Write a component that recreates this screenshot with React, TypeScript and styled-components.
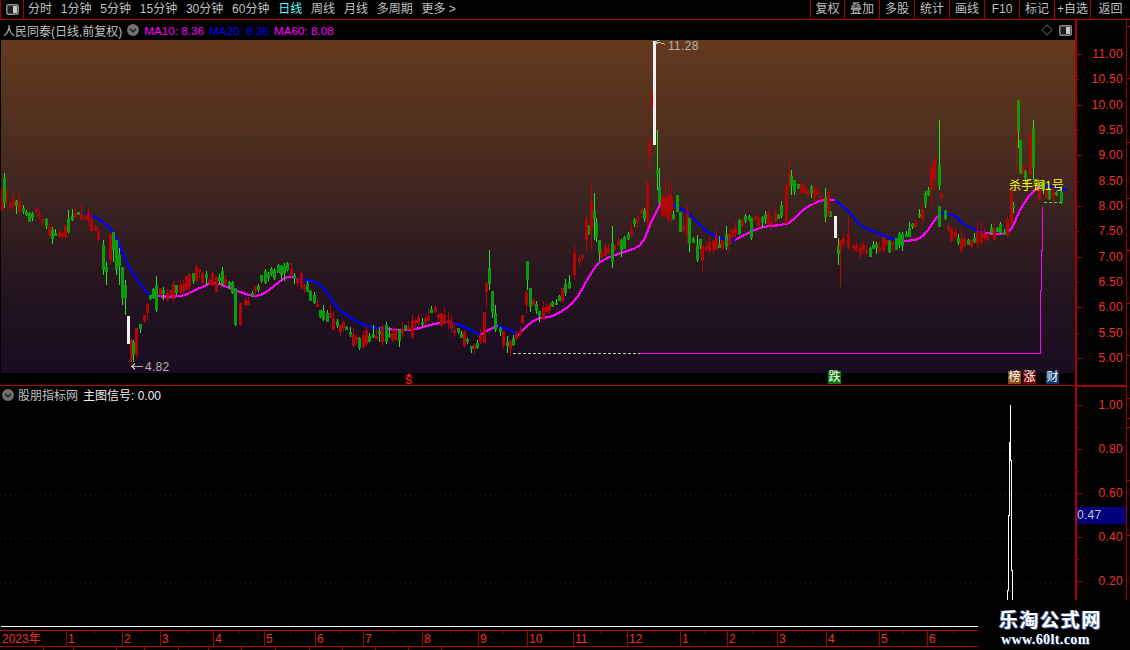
import styled, { createGlobalStyle } from "styled-components";

const RED = "#a80000";
const CJK = `"Liberation Sans", "Noto Sans CJK SC", sans-serif`;

const GlobalStyle = createGlobalStyle`
  html, body {
    margin: 0;
    padding: 0;
    background: #000;
    overflow: hidden;
  }
`;

const Page = styled.div`
  position: relative;
  width: 1130px;
  height: 650px;
  background: #000;
  overflow: hidden;
  font-family: ${CJK};
  font-size: 12px;
  color: #c0c0c0;
  display: flex;
  flex-direction: column;
`;

const Toolbar = styled.div`
  height: 20px;
  box-sizing: border-box;
  border-bottom: 1px solid ${RED};
  display: flex;
  align-items: center;
  flex: none;
`;

const ToggleCell = styled.div`
  width: 24px;
  height: 19px;
  box-sizing: border-box;
  border-right: 1px solid ${RED};
  border-left: 1px solid ${RED};
  display: flex;
  align-items: center;
  justify-content: center;
  margin-right: 4px;
`;

const PeriodList = styled.div`
  display: flex;
  gap: 8.8px;
`;

const Period = styled.span<{ $active?: boolean }>`
  color: ${({ $active }) => ($active ? "#55ffff" : "#c0c0c0")};
  line-height: 19px;
  white-space: nowrap;
`;

const ActionList = styled.div`
  margin-left: auto;
  display: flex;
  height: 19px;
`;

const Action = styled.div<{ $w: number }>`
  width: ${({ $w }) => $w}px;
  box-sizing: border-box;
  border-left: 1px solid ${RED};
  text-align: center;
  line-height: 19px;
  white-space: nowrap;
`;

const Workspace = styled.div`
  height: 610px;
  display: flex;
  flex: none;
`;

const ChartColumn = styled.div`
  width: 1075px;
  display: flex;
  flex-direction: column;
  flex: none;
`;

const TitleRow = styled.div`
  height: 20px;
  display: flex;
  align-items: center;
  padding: 0 3px 0 3px;
  flex: none;
`;

const TitleText = styled.span`
  margin-right: 5px;
  white-space: nowrap;
`;

const MaText = styled.span<{ $color: string }>`
  color: ${({ $color }) => $color};
  font-size: 11.7px;
  margin-left: 5px;
  white-space: nowrap;
`;

const TitleTools = styled.div`
  margin-left: auto;
  display: flex;
  align-items: center;
  gap: 6px;
`;

const PriceChart = styled.div`
  position: relative;
  height: 333px;
  margin-left: 1px;
  background: linear-gradient(180deg, #643a1e 0%, #52301e 25%, #3a2320 50%, #24141f 75%, #190b22 100%);
  flex: none;
`;

const ChartSvg = styled.svg`
  display: block;
  position: absolute;
  inset: 0;
`;

const PriceNote = styled.span<{ $left: number; $top: number }>`
  position: absolute;
  left: ${({ $left }) => $left}px;
  top: ${({ $top }) => $top}px;
  color: #b4b4a8;
  letter-spacing: 0.3px;
  line-height: 14px;
`;

const SignalNote = styled.span`
  position: absolute;
  left: 1008px;
  top: 139px;
  color: #ffff00;
  line-height: 14px;
  white-space: nowrap;
`;

const MarkStrip = styled.div`
  position: relative;
  height: 12px;
  border-bottom: 1px solid ${RED};
  flex: none;
`;

const Mark = styled.span<{ $left: number; $bg: string }>`
  position: absolute;
  left: ${({ $left }) => $left}px;
  top: -2px;
  width: 13px;
  height: 13px;
  background: ${({ $bg }) => $bg};
  color: #fff;
  font-size: 12px;
  line-height: 13px;
  text-align: center;
`;

const SignalMark = styled.span`
  position: absolute;
  left: 405px;
  top: 3px;
  color: #f01010;
  font-size: 11px;
  font-weight: 700;
  line-height: 9px;

  &::before {
    content: "";
    position: absolute;
    left: 1px;
    top: -3px;
    border-left: 3px solid transparent;
    border-right: 3px solid transparent;
    border-bottom: 3px solid #f01010;
  }
`;

const SubHeader = styled.div`
  height: 17px;
  display: flex;
  align-items: center;
  padding-left: 2px;
  flex: none;
`;

const IndicatorName = styled.span`
  margin-left: 4px;
  white-space: nowrap;
`;

const IndicatorValue = styled.span`
  margin-left: 5px;
  color: #eeeeee;
  white-space: nowrap;
`;

const SubPlot = styled.div`
  height: 224px;
  position: relative;
  flex: none;
`;

const AxisColumn = styled.div`
  width: 51px;
  box-sizing: border-box;
  border-left: 2px solid ${RED};
  display: flex;
  flex-direction: column;
  flex: none;
`;

const PriceAxis = styled.div`
  height: 365px;
  box-sizing: border-box;
  padding-top: 21.3px;
  flex: none;
`;

const SubAxis = styled.div`
  position: relative;
  flex: 1;
  box-sizing: border-box;
  border-top: 2px solid ${RED};
  padding-top: 7px;
`;

const AxisRow = styled.div<{ $h: number }>`
  position: relative;
  height: ${({ $h }) => $h}px;
  display: flex;
  align-items: center;
  justify-content: flex-end;
  padding-right: 3px;
  color: #f03030;
  letter-spacing: 0.3px;
`;

const AxisTick = styled.i<{ $major?: boolean }>`
  position: absolute;
  left: 0;
  top: 50%;
  width: ${({ $major }) => ($major ? 5 : 2)}px;
  height: 1px;
  background: ${RED};
`;

const ValueBox = styled.div`
  position: absolute;
  left: 0;
  right: 0;
  top: 120px;
  height: 17px;
  background: #00007c;
  color: #c8c8c8;
  line-height: 17px;
  letter-spacing: 0.3px;
`;

const Gutter = styled.div`
  width: 4px;
  box-sizing: border-box;
  border-left: 1px solid ${RED};
  flex: none;
`;

const GutterTick = styled.div<{ $gap: number }>`
  height: 1px;
  margin-top: ${({ $gap }) => $gap}px;
  background: ${RED};
`;

const DateRow = styled.div`
  height: 17px;
  box-sizing: border-box;
  border-top: 1px solid ${RED};
  border-bottom: 1px solid ${RED};
  display: flex;
  color: #f03030;
  flex: none;
`;

const DateCell = styled.div<{ $w: number; $first?: boolean }>`
  width: ${({ $w }) => $w}px;
  box-sizing: border-box;
  border-left: ${({ $first }) => ($first ? "none" : `1px solid ${RED}`)};
  padding-left: ${({ $first }) => ($first ? 2 : 1)}px;
  line-height: 16px;
  flex: none;
  white-space: nowrap;
  background-image: linear-gradient(${RED}, ${RED});
  background-size: 1px 2px;
  background-repeat: no-repeat;
  background-position: 50% 0;
`;

const StatusRow = styled.div`
  height: 3px;
  display: flex;
  flex: none;
  overflow: hidden;
`;

const StatusCell = styled.div<{ $w: number }>`
  width: ${({ $w }) => $w}px;
  box-sizing: border-box;
  border-right: 1px solid ${RED};
  flex: none;
`;

const Watermark = styled.div`
  position: absolute;
  left: 978px;
  right: 0;
  top: 600px;
  bottom: 0;
  background: #000;
  display: flex;
  flex-direction: column;
  align-items: flex-start;
  padding: 8px 0 0 21px;
  box-sizing: border-box;
`;

const WatermarkTitle = styled.div`
  color: #fff;
  font-family: "Noto Sans CJK SC", sans-serif;
  font-size: 19px;
  font-weight: 700;
  line-height: 21px;
  letter-spacing: 1.6px;
  text-shadow: 1px 1px 0 #3a5a9a, -1px 0 0 #7a90c0;
  white-space: nowrap;
`;

const WatermarkUrl = styled.div`
  margin: 4px 0 0 2px;
  color: #fff;
  font-family: "Liberation Serif", serif;
  font-size: 14px;
  font-weight: 700;
  line-height: 14px;
  letter-spacing: 0.4px;
  text-shadow: 1px 1px 0 #24408a;
  white-space: nowrap;
`;

type Point = [number, number];
type Candle = [number, number, number, number, number, "r" | "g" | "w"];

// closing price path read off the screenshot, in page pixels
const PATH: Point[] = [
  [2, 192], [8, 202], [15, 205], [25, 216], [35, 210], [55, 238], [65, 228], [75, 210], [90, 222],
  [98, 235], [105, 262], [115, 245], [122, 285], [128, 325], [133, 350], [140, 322], [150, 295],
  [155, 292], [170, 295], [185, 285], [197, 272], [210, 282], [225, 280], [235, 298], [240, 310],
  [250, 296], [265, 274], [285, 268], [300, 280], [320, 312], [340, 326], [355, 342], [375, 336],
  [400, 332], [420, 320], [435, 312], [450, 326], [470, 347], [483, 338], [497, 322], [505, 346],
  [515, 340], [530, 300], [540, 315], [560, 298], [580, 258], [590, 220], [600, 252], [625, 240],
  [640, 212], [662, 205], [680, 222], [692, 240], [705, 250], [720, 245], [745, 216], [770, 222],
  [785, 205], [795, 182], [810, 192], [825, 197], [833, 225], [845, 245], [870, 250], [900, 240],
  [920, 215], [935, 165], [945, 225], [960, 245], [985, 235], [1005, 230], [1012, 205], [1036, 180],
  [1045, 192], [1066, 197],
];

const BLUE_RUNS: Point[][] = [
  [[85, 213], [100, 220], [115, 235], [128, 265], [145, 290], [151, 296]],
  [[295, 278], [320, 285], [340, 310], [365, 325], [385, 329]],
  [[445, 322], [460, 325], [480, 335]],
  [[498, 326], [510, 330], [518, 335]],
  [[665, 203], [680, 208], [690, 215], [705, 230], [720, 238], [735, 240]],
  [[835, 200], [850, 213], [860, 225], [875, 232], [890, 238], [900, 241]],
  [[940, 213], [955, 216], [965, 225], [985, 233]],
  [[1040, 186], [1055, 187], [1067, 190]],
];

const PINK_RUNS: Point[][] = [
  [[151, 296], [180, 296], [200, 288], [215, 283], [240, 292], [260, 295], [285, 278], [295, 278]],
  [[385, 329], [410, 330], [430, 325], [445, 322]],
  [[480, 335], [490, 329], [498, 326]],
  [[518, 335], [535, 320], [555, 315], [575, 300], [590, 275], [600, 262], [615, 255], [640, 245], [650, 225], [660, 205], [665, 203]],
  [[735, 240], [760, 228], [780, 225], [790, 222], [803, 210], [815, 203], [825, 200], [835, 200]],
  [[900, 241], [920, 238], [935, 220], [940, 213]],
  [[985, 233], [1008, 232], [1020, 210], [1030, 195], [1040, 186]],
];

// the candles that stand out, placed by hand: x, body top, body bottom, wick top, wick bottom, colour
const SPECIAL: Candle[] = [
  [1, 188, 210, 188, 210, "r"], [3, 178, 202, 173, 208, "g"],
  [102, 245, 270, 240, 275, "g"], [105, 267, 272, 262, 285, "g"], [109, 234, 260, 234, 265, "r"],
  [112, 232, 250, 232, 262, "g"], [115, 240, 270, 240, 275, "g"], [118, 255, 266, 248, 285, "g"],
  [121, 267, 298, 267, 305, "g"], [124, 285, 298, 280, 315, "g"], [127, 316, 344, 316, 344, "w"],
  [130, 340, 360, 338, 366, "r"], [132, 342, 354, 340, 362, "g"], [135, 328, 355, 328, 358, "r"],
  [155, 285, 310, 276, 312, "g"], [234, 288, 325, 288, 326, "g"], [239, 303, 325, 303, 326, "r"],
  [483, 312, 343, 312, 343, "r"], [485, 283, 292, 283, 308, "r"], [488, 268, 284, 250, 290, "g"],
  [491, 291, 313, 291, 318, "g"], [494, 313, 330, 305, 332, "g"],
  [521, 315, 323, 315, 323, "r"], [525, 292, 305, 290, 313, "r"], [526, 261, 280, 261, 290, "g"],
  [529, 288, 307, 288, 312, "g"],
  [573, 253, 275, 245, 280, "r"], [585, 220, 240, 216, 252, "r"], [590, 202, 230, 183, 250, "r"],
  [593, 211, 218, 193, 240, "g"], [595, 222, 237, 218, 242, "g"], [598, 240, 253, 240, 262, "g"],
  [611, 243, 262, 226, 268, "g"],
  [646, 182, 222, 182, 228, "r"], [648, 140, 156, 140, 170, "r"], [651, 92, 110, 92, 110, "r"],
  [653, 41, 145, 41, 145, "w"], [656, 170, 173, 130, 190, "g"], [658, 187, 203, 168, 204, "g"],
  [661, 196, 216, 196, 218, "r"], [664, 198, 215, 180, 218, "r"], [667, 195, 220, 180, 222, "r"],
  [670, 196, 212, 187, 222, "r"], [676, 195, 212, 195, 212, "g"], [679, 212, 232, 212, 232, "g"],
  [686, 213, 235, 205, 242, "r"], [688, 218, 243, 218, 252, "g"], [696, 245, 260, 235, 262, "g"],
  [701, 245, 260, 245, 272, "r"],
  [750, 218, 238, 218, 240, "g"],
  [785, 185, 224, 185, 224, "r"], [788, 173, 184, 160, 190, "r"], [790, 176, 186, 170, 195, "g"],
  [793, 180, 192, 180, 195, "g"], [824, 198, 217, 188, 222, "g"], [827, 192, 216, 190, 216, "r"],
  [834, 216, 238, 216, 238, "w"], [837, 246, 254, 238, 265, "g"], [839, 240, 250, 240, 287, "r"],
  [847, 234, 247, 216, 250, "r"],
  [930, 166, 190, 166, 205, "r"], [933, 160, 180, 155, 190, "r"], [938, 165, 186, 120, 190, "g"],
  [938, 206, 227, 206, 227, "g"],
  [1010, 190, 225, 190, 225, "r"], [1015, 143, 144, 100, 175, "r"], [1017, 100, 131, 100, 148, "g"],
  [1019, 140, 174, 140, 174, "g"], [1022, 165, 174, 165, 174, "r"], [1024, 172, 178, 170, 185, "g"],
  [1029, 132, 175, 132, 175, "r"], [1032, 128, 168, 120, 180, "g"],
  [1038, 190, 200, 178, 202, "r"], [1060, 192, 202, 186, 204, "g"],
];

const mulberry = (seed: number) => () => {
  seed = (seed + 0x6d2b79f5) | 0;
  let t = Math.imul(seed ^ (seed >>> 15), 1 | seed);
  t = (t + Math.imul(t ^ (t >>> 7), 61 | t)) ^ t;
  return ((t ^ (t >>> 14)) >>> 0) / 4294967296;
};

const pathY = (x: number) => {
  for (let i = 1; i < PATH.length; i++) {
    if (x <= PATH[i][0]) {
      const [x0, y0] = PATH[i - 1];
      const [x1, y1] = PATH[i];
      return y0 + ((y1 - y0) * (x - x0)) / (x1 - x0);
    }
  }
  return PATH[PATH.length - 1][1];
};

const makeCandles = (): Candle[] => {
  const rnd = mulberry(60);
  const list: Candle[] = [];
  for (let x = 2; x < 1064; x += 3.27) {
    if (SPECIAL.some((c) => Math.abs(c[0] - x) < 2.2)) continue;
    const mid = pathY(x) + (rnd() - 0.5) * 7;
    const body = 3 + rnd() * rnd() * 16;
    const top = Math.round(mid - body / 2);
    const bot = Math.round(mid + body / 2);
    const wt = top - Math.round(rnd() * rnd() * 11);
    const wb = bot + Math.round(rnd() * rnd() * 9);
    list.push([Math.round(x), top, bot, wt, wb, rnd() > 0.5 ? "r" : "g"]);
  }
  return [...list, ...SPECIAL];
};

const CANDLES = makeCandles();

const BODY = { r: "#b00606", g: "#0a9c0a", w: "#f0f0f0" };
const WICK = { r: "#b00606", g: "#22e022", w: "#f0f0f0" };

// catmull-rom through the hand-read points, so the average line bends instead of kinking
const smooth = (run: Point[]) => {
  const out: string[] = [];
  for (let i = 0; i < run.length - 1; i++) {
    const p0 = run[Math.max(i - 1, 0)];
    const p1 = run[i];
    const p2 = run[i + 1];
    const p3 = run[Math.min(i + 2, run.length - 1)];
    const steps = Math.max(2, Math.round((p2[0] - p1[0]) / 3));
    for (let s = 0; s < steps; s++) {
      const t = s / steps;
      const f = (a: number, b: number, c: number, d: number) =>
        0.5 * (2 * b + (c - a) * t + (2 * a - 5 * b + 4 * c - d) * t * t + (3 * b - a - 3 * c + d) * t * t * t);
      out.push(`${f(p0[0], p1[0], p2[0], p3[0]).toFixed(1)},${f(p0[1], p1[1], p2[1], p3[1]).toFixed(1)}`);
    }
  }
  out.push(run[run.length - 1].join(","));
  return out.join(" ");
};

function Chevron() {
  return (
    <svg width="12" height="12" viewBox="0 0 12 12">
      <circle cx="6" cy="6" r="6" fill="#707070" />
      <path d="M3 4.8 6 7.8 9 4.8" fill="none" stroke="#1c1c1c" strokeWidth="1.4" />
    </svg>
  );
}

function PanelToggle() {
  return (
    <svg width="13" height="11" viewBox="0 0 13 11">
      <rect x="0.75" y="0.75" width="11.5" height="9.5" rx="1.5" fill="#202020" stroke="#8c8c8c" strokeWidth="1.5" />
      <rect x="7" y="2" width="4" height="7" fill="#c8c8c8" />
    </svg>
  );
}

function PriceDrawing() {
  return (
    <ChartSvg width="1074" height="333" viewBox="1 40 1074 333" shapeRendering="crispEdges">
      {BLUE_RUNS.map((run, i) => (
        <polyline key={i} points={smooth(run)} fill="none" stroke="#0000ff" strokeWidth="2.2" />
      ))}
      {PINK_RUNS.map((run, i) => (
        <polyline key={i} points={smooth(run)} fill="none" stroke="#ff00ff" strokeWidth="2.2" />
      ))}
      {CANDLES.map(([x, top, bot, wt, wb, kind], i) => (
        <g key={i}>
          <rect x={x + 1} y={wt} width="1" height={wb - wt} fill={WICK[kind]} />
          <rect x={x} y={top} width="3" height={bot - top} fill={BODY[kind]} />
        </g>
      ))}
      <path d="M513 353.5h127" stroke="#b8d8a8" strokeWidth="1" strokeDasharray="3 2" fill="none" />
      <path d="M640 353.5H1040.5V290H1041.5V250H1042.5V207" stroke="#ff00ff" strokeWidth="1" fill="none" />
      <path d="M1044 202.5h18" stroke="#40e040" strokeWidth="1" strokeDasharray="3 2" fill="none" />
      <path d="M143 366.5h-11m3-3-3 3 3 3" stroke="#b4b4a8" strokeWidth="1" fill="none" />
      <path d="M665 44.5l-5-2h-4m2.5-2.5-3 2.5 3 2" stroke="#b4b4a8" strokeWidth="1" fill="none" />
    </ChartSvg>
  );
}

function SubDrawing() {
  const grid = [450, 494, 538, 582];
  return (
    <ChartSvg width="1075" height="224" viewBox="0 403 1075 224" shapeRendering="crispEdges">
      {grid.map((y) => (
        <line key={y} x1="0" x2="1075" y1={y + 0.5} y2={y + 0.5} stroke="#5e1010" strokeDasharray="1 4" />
      ))}
      <path
        d="M1010.5 405V442H1009.5V515H1008.5V590H1007.5V605M1010.5 442V460H1011.5V570H1012.5V605"
        fill="none"
        stroke="#fff"
        strokeWidth="1"
      />
      <line x1="1" x2="1075" y1="626.5" y2="626.5" stroke="#fff" strokeWidth="1" />
    </ChartSvg>
  );
}

const PERIODS = ["分时", "1分钟", "5分钟", "15分钟", "30分钟", "60分钟", "日线", "周线", "月线", "多周期", "更多 >"];
const ACTIONS: [string, number][] = [
  ["复权", 34], ["叠加", 35], ["多股", 35], ["统计", 35], ["画线", 35],
  ["F10", 35], ["标记", 35], ["+自选", 36], ["返回", 40],
];
const PRICE_LABELS = ["11.00", "10.50", "10.00", "9.50", "9.00", "8.50", "8.00", "7.50", "7.00", "6.50", "6.00", "5.50", "5.00"];
const SUB_LABELS = ["1.00", "", "0.80", "", "0.60", "", "0.40", "", "0.20"];
const GUTTER_GAPS = [6, 51, 63, 55, 51, 52, 51, 42, 19, 8, 52, 54];
const MONTHS: [string, number][] = [
  ["2023年", 66], ["1", 56], ["2", 38], ["3", 53], ["4", 51], ["5", 51], ["6", 48], ["7", 59],
  ["8", 56], ["9", 49], ["10", 46], ["11", 54], ["12", 53], ["1", 47], ["2", 50], ["3", 49],
  ["4", 53], ["5", 48], ["6", 51],
];
const STATUS_WIDTHS = [44, 30, 43, 28, 34, 30, 33, 34, 34, 33, 33, 33, 33];

export default function App() {
  return (
    <Page>
      <GlobalStyle />
      <Toolbar>
        <ToggleCell>
          <PanelToggle />
        </ToggleCell>
        <PeriodList>
          {PERIODS.map((p) => (
            <Period key={p} $active={p === "日线"}>{p}</Period>
          ))}
        </PeriodList>
        <ActionList>
          {ACTIONS.map(([label, w]) => (
            <Action key={label} $w={w}>{label}</Action>
          ))}
        </ActionList>
      </Toolbar>

      <Workspace>
        <ChartColumn>
          <TitleRow>
            <TitleText>人民同泰(日线,前复权)</TitleText>
            <Chevron />
            <MaText $color="#ff00ff">MA10: 8.36</MaText>
            <MaText $color="#0000ff">MA20: 8.36</MaText>
            <MaText $color="#ff00ff">MA60: 8.08</MaText>
            <TitleTools>
              <svg width="12" height="12" viewBox="0 0 12 12">
                <path d="M6 .8 11.2 6 6 11.2 .8 6Z" fill="none" stroke="#707070" />
              </svg>
              <PanelToggle />
            </TitleTools>
          </TitleRow>

          <PriceChart>
            <PriceDrawing />
            <PriceNote $left={667} $top={-1}>11.28</PriceNote>
            <PriceNote $left={144} $top={320}>4.82</PriceNote>
            <SignalNote>杀手锏1号</SignalNote>
          </PriceChart>

          <MarkStrip>
            <SignalMark>S</SignalMark>
            <Mark $left={828} $bg="#0a7a0a">跌</Mark>
            <Mark $left={1008} $bg="#8a4a10">榜</Mark>
            <Mark $left={1023} $bg="#780808">涨</Mark>
            <Mark $left={1046} $bg="#0c3a6e">财</Mark>
          </MarkStrip>

          <SubHeader>
            <Chevron />
            <IndicatorName>股朋指标网</IndicatorName>
            <IndicatorValue>主图信号: 0.00</IndicatorValue>
          </SubHeader>

          <SubPlot>
            <SubDrawing />
          </SubPlot>
        </ChartColumn>

        <AxisColumn>
          <PriceAxis>
            {PRICE_LABELS.map((label) => (
              <AxisRow key={label} $h={25.33}>
                <AxisTick $major={label.endsWith(".00")} />
                {label}
              </AxisRow>
            ))}
          </PriceAxis>
          <SubAxis>
            {SUB_LABELS.map((label, i) => (
              <AxisRow key={i} $h={22}>
                <AxisTick $major={label !== ""} />
                {label}
              </AxisRow>
            ))}
            <ValueBox>0.47</ValueBox>
          </SubAxis>
        </AxisColumn>

        <Gutter>
          {GUTTER_GAPS.map((gap, i) => (
            <GutterTick key={i} $gap={gap} />
          ))}
        </Gutter>
      </Workspace>

      <DateRow>
        {MONTHS.map(([label, w], i) => (
          <DateCell key={i} $w={w} $first={i === 0}>{label}</DateCell>
        ))}
      </DateRow>

      <StatusRow>
        {STATUS_WIDTHS.map((w, i) => (
          <StatusCell key={i} $w={w} />
        ))}
      </StatusRow>

      <Watermark>
        <WatermarkTitle>乐淘公式网</WatermarkTitle>
        <WatermarkUrl>www.60lt.com</WatermarkUrl>
      </Watermark>
    </Page>
  );
}
